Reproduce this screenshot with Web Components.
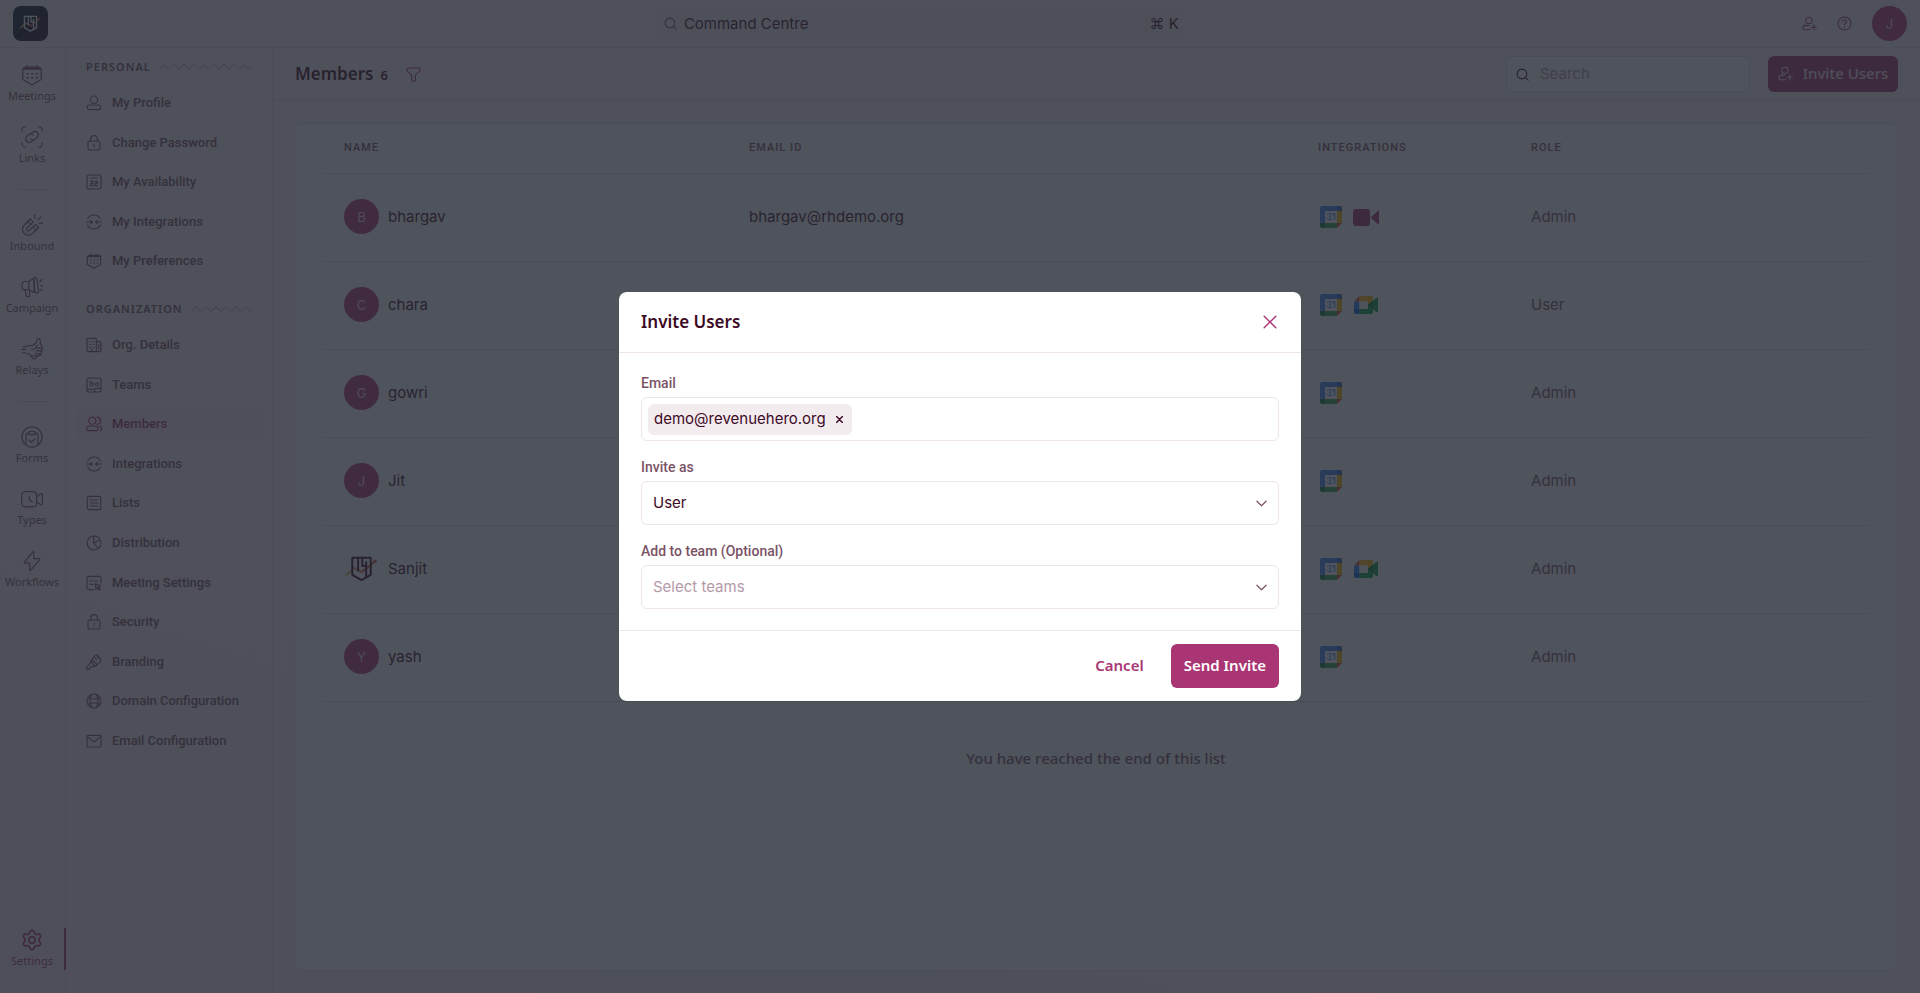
<!DOCTYPE html>
<html lang="en">
<head>
<meta charset="utf-8">
<meta name="viewport" content="width=device-width, initial-scale=1">
<title>Members</title>
<style>
  :root {
    --ink: #3d0a26;
    --muted: #7a5266;
    --faint: #b499a7;
    --line: #efe4e9;
    --rule: #e9dbe3;
    --brand: #aa3574;
    --ui: "Noto Sans", "Open Sans", sans-serif;
    --label: Roboto, "Noto Sans", sans-serif;
    --text: Inter, "Noto Sans", sans-serif;
  }
  body { margin: 0; font-family: var(--ui); color: var(--ink); }
</style>
</head>
<body>
<rh-app></rh-app>
<rh-invite-dialog></rh-invite-dialog>

<script>
const define = (name, html, setup) => {
  const tpl = document.createElement('template');
  tpl.innerHTML = html;
  customElements.define(name, class extends HTMLElement {
    constructor() {
      super();
      this.attachShadow({ mode: 'open' }).append(tpl.content.cloneNode(true));
    }
    connectedCallback() { if (setup) setup(this, this.shadowRoot); }
  });
};

const ICONS = {
  meetings: '<path d="M2 5.5v11.5l10 6 10-6V5.500"/><path d="M2.500 5.500C2.500 4 3 3.500 4.500 3.500h15c1.500 0 2 .5 2 2z" fill="currentColor"/><path d="M7 1.500v3M17 1.500v3"/><path d="M7 10.500h.5M12 10.500h.5M17 10.500h.5M7 15h.5M12 15h.5M17 15h.5" stroke-width="2"/>',
  links: '<path d="M1 5.500V4.500a3.500 3.500 0 0 1 3.500-3.500M19.500 1A3.500 3.500 0 0 1 23 4.500v1M23 18.500v1a3.500 3.500 0 0 1-3.500 3.500M4.500 23A3.500 3.500 0 0 1 1 19.500v-1"/><path d="M11 8.500l1.800-1.700a3.700 3.700 0 0 1 5.200 5.200l-2.300 2.300a3.700 3.700 0 0 1-5.300-.3"/><path d="M13 15.500l-1.800 1.700a3.700 3.700 0 0 1-5.200-5.200l2.300-2.300a3.700 3.700 0 0 1 5.300.3"/>',
  inbound: '<path d="M10 5.500L3.500 12a6.500 6.500 0 0 0 9.200 9.200l6.500-6.500-3.400-3.400-6.500 6.500a1.800 1.800 0 0 1-2.600-2.600l6.600-6.400z"/><path d="M7.300 8.200l3.300 3.300M13 14l3.300 3.300M15 .8V4.500M22 2.800l-3.500 3.700M23.500 10h-3.700"/>',
  campaign: '<path d="M8.500 6H4a3 3 0 0 0-3 3v3a3 3 0 0 0 3 3h4.500zM8.500 6L14 2.500M8.500 15l6 3M14 2.500c1.500-1.500 3-1 3.300 1l2 12.500c.3 2-1.500 3-3.300 2l-1.500-1z"/><path d="M14 3l1 13M4.500 15l1.200 6.500c.3 1.500 3.600 1.500 3.600 0V15.500M20.500 6l2.500-2.500M21.500 10.500H24M21.500 14.500l2 1.500"/>',
  relays: '<path d="M7 8.500l6-.5 4-3 .3-3a1.900 1.900 0 0 1 3.700.3V6c2 1.500 2.300 4 2 7-.2 3.500-1.500 5.500-3.500 6.500H11l-3-2.500H6"/><path d="M17 11h5M16.500 14h5.500M16 17h5M1 12.500h4M2 16h2.500M2.500 9.500h3M11 20l2 2.500h2.500l2-2.500M11.500 12.500c3 0 5-1.500 6.500-5"/>',
  forms: '<circle cx="12" cy="12" r="11"/><path d="M8.500 8H7a1.500 1.500 0 0 0-1.500 1.500V20.500M15.500 8H17a1.500 1.500 0 0 1 1.500 1.500V20.500"/><rect x="8.500" y="6" width="7" height="3.500" rx="1"/><path d="M9 15.500l2.200 2.200 3.800-3.700"/>',
  types: '<rect x=".8" y="4" width="16.200" height="16.500" rx="3.500"/><path d="M17 10l4-3.500q2.300-1 2.300 1V17q0 2-2.300 1l-4-3.200M9 9v3.500l3 2.500"/>',
  workflows: '<path d="M13.500 1.500L3.500 13.500q-.3.800.7.800H9.500V21.500q.2 1.500 1.200.5L20.500 10.500q.3-1-.7-1H14V2.500q-.1-1.500-.5-1z"/>',
  settings: '<path stroke-width="1.800" d="M9.700 3.500C10.300 .7 13.700 .7 14.300 3.500c.4 1.800 2.300 2.900 4 2.300 2.500-.9 4.200 2 2.300 3.900-1.300 1.200-1.300 3.400 0 4.600 1.900 1.900.2 4.800-2.300 3.900-1.700-.6-3.600.5-4 2.300-.6 2.800-4 2.800-4.600 0-.4-1.800-2.300-2.900-4-2.300-2.500.9-4.200-2-2.300-3.900 1.300-1.200 1.300-3.400 0-4.600C1.500 7.800 3.200 4.900 5.700 5.800c1.700.6 3.600-.5 4-2.300z"/><circle cx="12" cy="12" r="3.400" stroke-width="1.800"/>',
  profile: '<circle cx="12" cy="7" r="5.500"/><path d="M5.500 15h13c2 0 3.500 1.500 3.500 3.500S21 22 19.500 22h-15C3 22 2 20.500 2 18.500S3.500 15 5.500 15z"/>',
  lock: '<rect x="3" y="9" width="18" height="13.500" rx="2.500"/><path d="M7 9V6a5 5 0 0 1 10 0v3M12 14v4"/>',
  availability: '<rect x="1.500" y="1.500" width="21" height="21" rx="3.500"/><path d="M7 6h10M7 11h3.500v3H7v3.500h3.500M13.500 11H17v3h-3.500v3.500H17"/>',
  integrations: '<path d="M2.500 7.500a10.500 10.500 0 0 1 19 0M2.500 16.500a10.500 10.500 0 0 0 19 0M.5 12h9M7 9.500L9.500 12 7 14.500M23.500 12h-9M17 9.500L14.500 12l2.500 2.500"/>',
  org: '<rect x="1.500" y="2" width="14" height="20" rx="1.500"/><path d="M15.500 7h5a2 2 0 0 1 2 2v11a2 2 0 0 1-2 2h-5M19 11v7M5.500 6.500h1M10.500 6.500h1M5.500 11h1M10.500 11h1M5.500 15.500h1M10.500 15.500h1M8.500 18v4"/>',
  teams: '<rect x="1.500" y="1.500" width="21" height="21" rx="3.500"/><circle cx="8.500" cy="11" r="2.500"/><circle cx="16.500" cy="11" r="2.300"/><path d="M2 18.500h10l2 4M13.500 17H22M5.500 7.500h2"/>',
  members: '<circle cx="9.500" cy="7" r="5.300"/><path d="M4.500 15h10c2 0 3.500 1.500 3.500 3.500 0 1.500-.5 3.500-2 3.500H3c-1.500 0-2-2-2-3.500C1 16.500 2.500 15 4.500 15zM16.500 1.700a5.300 5.300 0 0 1 0 10.600M20 15c2.500 0 3.500 1.500 3.500 3.500 0 1.500-.5 3.500-2 3.500"/>',
  lists: '<rect x="2" y="2" width="20" height="20" rx="2.500"/><path d="M6.500 7.500h11M6.500 12h11M6.500 16.500h11"/>',
  distribution: '<circle cx="12" cy="12" r="10.500"/><path d="M11.500 1.500V12l7 8M11.500 12l10-4.500"/>',
  meetset: '<path d="M12 22H4.500a3 3 0 0 1-3-3V5a3 3 0 0 1 3-3h15a3 3 0 0 1 3 3v7"/><path d="M6 9h4M13 9h5M6 14h5M14 13l8 3-3.500 1.500 3 4-1.500 1-3-4-2 3z"/>',
  branding: '<path d="M13 3l3.500-1.500 6 6.500-1 3.500-7.500 7L7 11zM7 11l-1.500 4.500L1.500 19a2 2 0 0 0 3 3.500L8.500 18.500 14 18.500M14 6l2 2M17 3.500l2 2.500M9.500 9l7 7"/>',
  domain: '<circle cx="12" cy="12" r="10.500"/><path d="M3 7.500c6 2 12 2 18 0M3 16.500c6-2 12-2 18 0M9 1.800C5 8 5 16 9 22.200M15 1.800c4 6.200 4 14.200 0 20.400"/>',
  mail: '<rect x="1.500" y="3.500" width="21" height="17.500" rx="1.500"/><path d="M2 5.500l10 8 10-8"/>',
  search: '<circle cx="11" cy="11" r="9"/><path d="M17.500 17.500L22.500 22.500"/>',
  filter: '<path d="M3 1.500h18c1 0 1.500.8 1.500 2v2.200L15 13v9l-3.500 1L9 21v-8L1.500 5.700V3.500c0-1.200.5-2 1.500-2z"/>',
  adduser: '<circle cx="11" cy="7" r="5"/><path d="M11 15H5c-2 0-3.500 1.500-3.500 3.500S2.500 22 4 22h9M19 14v8M15 18h8"/>',
  help: '<circle cx="12" cy="12" r="10.500"/><path d="M8.800 9.200a3.200 3.200 0 1 1 4.800 2.800c-1.100.7-1.600 1.200-1.600 2.300M12 17v.8"/>',
  close: '<path d="M2 2l20 20M22 2L2 22"/>',
  chevron: '<path d="M2 7l10 10L22 7"/>'
};

customElements.define('rh-icon', class extends HTMLElement {
  constructor() { super(); this.attachShadow({ mode: 'open' }); }
  connectedCallback() {
    const size = this.getAttribute('size') || 16;
    const weight = this.getAttribute('weight') || 1.7;
    this.shadowRoot.innerHTML = `<style>:host{display:inline-flex;flex:none}svg{display:block}</style>
      <svg width="${size}" height="${size}" viewBox="0 0 24 24" fill="none" stroke="currentColor" stroke-width="${weight}" stroke-linecap="round" stroke-linejoin="round" aria-hidden="true">${ICONS[this.getAttribute('name')]}</svg>`;
  }
});

/* Shield logo; its outline takes the current text colour. */
define('rh-logo', `
<style>:host{display:block}svg{display:block;width:100%;height:100%}</style>
<svg viewBox="0 0 36 36" fill="none" stroke-linejoin="round" stroke-linecap="round" aria-hidden="true">
  <path d="M2.500 24.500l8-7" stroke="#d9a766" stroke-width="2.200"/>
  <path d="M10.500 17.500l8 4" stroke="#dd9468" stroke-width="2.200"/>
  <path d="M18.500 21.500l13-10.500" stroke="#d86e5c" stroke-width="2.200"/>
  <circle cx="32" cy="10.500" r="1.700" fill="#d85548"/>
  <path d="M8.500 7h19v17.500L18 30l-9.500-5.500z" stroke="currentColor" stroke-width="2"/>
  <path d="M14.500 7v13M18.800 7v8.500h4M22.800 11.500v15" stroke="currentColor" stroke-width="2"/>
</svg>`);

define('rh-avatar', `
<style>
  :host { display: inline-grid; place-items: center; width: 35px; height: 35px; border-radius: 50%; flex: none;
    background: #bb3a7a; color: #f0d3e1; font: 400 13px/20px var(--text); }
</style><slot></slot>`);

define('rh-calendar-icon', `
<style>:host{display:inline-flex}</style>
<svg width="22" height="22" viewBox="0 0 22 22" role="img" aria-label="Google Calendar">
  <path d="M2 0h15v5H5v12H0V2a2 2 0 0 1 2-2z" fill="#4285f4"/>
  <path d="M17 0h3a2 2 0 0 1 2 2v3h-5z" fill="#1967d2"/>
  <path d="M17 5h5v12h-5z" fill="#fbbc04"/>
  <path d="M0 17h5v5H2a2 2 0 0 1-2-2z" fill="#188038"/>
  <path d="M5 17h12v5H5z" fill="#34a853"/>
  <path d="M17 17h5l-5 5z" fill="#ea4335"/>
  <path d="M5 5h12v12H5z" fill="#fff"/>
  <text x="11" y="14" text-anchor="middle" font-family="Inter, sans-serif" font-size="9" font-weight="500" fill="#4285f4">31</text>
</svg>`);

define('rh-meet-icon', `
<style>:host{display:inline-flex}</style>
<svg width="26" height="22" viewBox="0 0 26 22" role="img" aria-label="Google Meet">
  <path d="M1 7.500L6.500 2v5.500z" fill="#ea4335"/><path d="M1 7.500h5.500V15H1z" fill="#2684fc"/>
  <path d="M1 15h5.500v5H3a2 2 0 0 1-2-2z" fill="#0066da"/>
  <path d="M6.500 2H18a2 2 0 0 1 2 2v4l-5 3.500v-4H6.500z" fill="#ffba00"/>
  <path d="M6.500 15H15v-3.500l5 4V18a2 2 0 0 1-2 2H6.500z" fill="#00ac47"/>
  <path d="M14.500 11l9-7q1.500-1 1.500 0v14q0 1-1.500 0z" fill="#00a045"/><path d="M6.500 7.500h8V15h-8z" fill="#fff"/><path d="M14.500 11L20 6.500v9z" fill="#00832d"/>
</svg>`);

define('rh-video-icon', `
<style>:host{display:inline-flex}</style>
<svg width="26" height="22" viewBox="0 0 26 22" role="img" aria-label="Video call">
  <rect y="3" width="17" height="17" rx="3" fill="#aa3574"/><path d="M17.500 11.500L26 4v15z" fill="#aa3574"/>
</svg>`);

define('rh-topbar', `
<style>
  :host { display: grid; grid-template-columns: 8fr 530px 9fr; align-items: center; height: 47px; padding: 0 13px; border-bottom: 1px solid var(--rule); }
  .mark { display: block; width: 35px; height: 35px; border-radius: 8px; background: linear-gradient(135deg, #10263f, #161222 50%, #2b0f38); color: #fff; padding: 6px; box-sizing: border-box; }
  .command { display: flex; align-items: center; gap: 7px; height: 30px; padding: 0 6px 0 9px; border: 0; border-radius: 6px; background: #f8eff3; color: var(--ink); font: 400 15px/24px var(--text); text-align: left; }
  .command rh-icon { color: var(--muted); }
  .command span { flex: 1; }
  .command kbd { font: inherit; }
  .tools { display: flex; justify-content: flex-end; align-items: center; gap: 20px; color: var(--brand); }
  .tools a { display: flex; color: inherit; text-decoration: none; }
</style>
<a class="mark" href="#home" aria-label="Home"><rh-logo></rh-logo></a>
<button class="command" type="button"><rh-icon name="search" size="13" weight="2"></rh-icon><span>Command Centre</span><kbd>⌘ K</kbd></button>
<div class="tools">
  <a href="#add" aria-label="Add user"><rh-icon name="adduser" size="15"></rh-icon></a>
  <a href="#help" aria-label="Help"><rh-icon name="help" size="15"></rh-icon></a>
  <a href="#me" aria-label="Account"><rh-avatar>J</rh-avatar></a>
</div>`);

define('rh-rail-item', `
<style>
  :host { display: block; color: var(--muted); border-right: 2px solid transparent; }
  :host([active]) { color: var(--brand); border-right-color: var(--brand); }
  a { display: flex; flex-direction: column; align-items: center; color: inherit; text-decoration: none; font: 400 11px/18px var(--ui); white-space: nowrap; }
  span { display: grid; place-items: center; height: 24px; }
</style>
<a><span></span><slot></slot></a>`, (el, root) => {
  root.querySelector('a').href = '#' + el.getAttribute('icon');
  root.querySelector('span').innerHTML = `<rh-icon name="${el.getAttribute('icon')}" size="22" weight="1.300"></rh-icon>`;
});

define('rh-rail', `
<style>
  :host { display: block; width: 65px; border-right: 1px solid var(--rule); }
  nav { display: flex; flex-direction: column; gap: 20px; height: 100%; box-sizing: border-box; padding: 15px 0 23px; margin-right: -1px; }
  hr { width: 29px; height: 1px; border: 0; margin: 2px auto 3px; background: #dcc9d2; }
  .last { margin-top: auto; }
</style>
<nav aria-label="Main">
  <rh-rail-item icon="meetings">Meetings</rh-rail-item>
  <rh-rail-item icon="links">Links</rh-rail-item>
  <hr>
  <rh-rail-item icon="inbound">Inbound</rh-rail-item>
  <rh-rail-item icon="campaign">Campaign</rh-rail-item>
  <rh-rail-item icon="relays">Relays</rh-rail-item>
  <hr>
  <rh-rail-item icon="forms">Forms</rh-rail-item>
  <rh-rail-item icon="types">Types</rh-rail-item>
  <rh-rail-item icon="workflows">Workflows</rh-rail-item>
  <rh-rail-item class="last" icon="settings" active>Settings</rh-rail-item>
</nav>`);

define('rh-menu-item', `
<style>
  :host { display: block; color: var(--muted); border-radius: 6px; }
  :host([active]) { color: var(--brand); background: #fbe9f1; }
  a { display: flex; align-items: center; gap: 10px; height: 36px; padding: 0 11px 0 10px; color: inherit; text-decoration: none; font: 500 13px/20px var(--label); white-space: nowrap; }
</style>
<a><i></i><slot></slot></a>`, (el, root) => {
  root.querySelector('a').href = '#' + el.getAttribute('icon');
  root.querySelector('i').outerHTML = `<rh-icon name="${el.getAttribute('icon')}" size="16" weight="1.700"></rh-icon>`;
});

/* Slotted items sit straight in .items, which spreads them evenly. */
define('rh-menu-group', `
<style>
  :host { display: block; }
  h2 { display: flex; align-items: center; gap: 8px; margin: 0 0 10px; padding: 0 10px; font: 600 11px/16px var(--ui); letter-spacing: 1px; color: var(--muted); }
  svg { flex: 1; height: 6px; min-width: 0; }
  .items { display: flex; flex-direction: column; justify-content: space-between; }
  :host(.short) .items { min-height: 194px; }
  :host(.long) .items { min-height: 432px; }
</style>
<h2><span></span><svg aria-hidden="true"><defs><pattern id="zig" width="10" height="6" patternUnits="userSpaceOnUse"><path d="M0 5.500L5 .5l5 5" fill="none" stroke="#b499a7"/></pattern></defs><rect width="100%" height="6" fill="url(#zig)"/></svg></h2>
<div class="items"><slot></slot></div>`, (el, root) => {
  root.querySelector('span').textContent = el.getAttribute('label');
});

define('rh-sidebar', `
<style>
  :host { display: flex; flex-direction: column; gap: 22px; width: 186px; padding: 11px 10px 0; border-right: 1px solid var(--rule); }
</style>
<rh-menu-group class="short" label="PERSONAL">
  <rh-menu-item icon="profile">My Profile</rh-menu-item>
  <rh-menu-item icon="lock">Change Password</rh-menu-item>
  <rh-menu-item icon="availability">My Availability</rh-menu-item>
  <rh-menu-item icon="integrations">My Integrations</rh-menu-item>
  <rh-menu-item icon="meetings">My Preferences</rh-menu-item>
</rh-menu-group>
<rh-menu-group class="long" label="ORGANIZATION">
  <rh-menu-item icon="org">Org. Details</rh-menu-item>
  <rh-menu-item icon="teams">Teams</rh-menu-item>
  <rh-menu-item icon="members" active>Members</rh-menu-item>
  <rh-menu-item icon="integrations">Integrations</rh-menu-item>
  <rh-menu-item icon="lists">Lists</rh-menu-item>
  <rh-menu-item icon="distribution">Distribution</rh-menu-item>
  <rh-menu-item icon="meetset">Meeting Settings</rh-menu-item>
  <rh-menu-item icon="lock">Security</rh-menu-item>
  <rh-menu-item icon="branding">Branding</rh-menu-item>
  <rh-menu-item icon="domain">Domain Configuration</rh-menu-item>
  <rh-menu-item icon="mail">Email Configuration</rh-menu-item>
</rh-menu-group>`);

define('rh-page-header', `
<style>
  :host { display: flex; align-items: center; height: 52px; padding: 0 22px; border-bottom: 1px solid var(--rule); }
  h1 { margin: 0; font: 600 17px/24px var(--ui); }
  .count { font: 600 13px/20px var(--ui); margin: 2px 18px 0 7px; }
  .filter { display: flex; padding: 0; border: 0; background: none; color: var(--brand); }
  .search { display: flex; align-items: center; gap: 11px; margin-left: auto; width: 244px; height: 36px; box-sizing: border-box; padding: 0 9px; border: 1px solid var(--rule); border-radius: 6px; background: #fcfcfd; }
  input { flex: 1; min-width: 0; border: 0; padding: 0; background: none; outline: 0; font: 400 15px/24px var(--text); color: var(--ink); }
  input::placeholder { color: var(--faint); opacity: 1; }
  .invite { display: flex; align-items: center; justify-content: center; gap: 10px; width: 130px; height: 36px; margin-left: 18px; padding: 0 0 2px; border: 0; border-radius: 6px; background: var(--brand); color: #f6e6ee; font: 500 15px/24px var(--ui); white-space: nowrap; }
</style>
<h1>Members</h1><span class="count">6</span>
<button class="filter" type="button" aria-label="Filter"><rh-icon name="filter" size="15"></rh-icon></button>
<label class="search"><rh-icon name="search" size="13" weight="2"></rh-icon><input type="search" placeholder="Search" aria-label="Search"></label>
<button class="invite" type="button"><rh-icon name="adduser" size="15"></rh-icon>Invite Users</button>`);

const MEMBERS = [
  ['bhargav', 'bhargav@rhdemo.org', 'video', 'Admin'],
  ['chara', '', 'meet', 'User'],
  ['gowri', '', '', 'Admin'],
  ['Jit', '', '', 'Admin'],
  ['Sanjit', '', 'meet', 'Admin'],
  ['yash', '', '', 'Admin']
];

define('rh-members-table', `
<style>
  :host { display: block; padding: 0 27px; border: 1px solid var(--rule); border-radius: 8px; background: #fff; }
  table { width: 100%; border-collapse: separate; border-spacing: 0; table-layout: fixed; }
  th, td { box-sizing: border-box; border-bottom: 1px solid var(--rule); padding: 0 22px 2px; }
  th { height: 50px; text-align: left; font: 500 11px/16px var(--label); letter-spacing: 1px; color: var(--muted); }
  th:nth-child(1) { width: 405px; } th:nth-child(2) { width: 36.760%; } th:nth-child(3) { width: 213px; }
  td { height: 88px; font: 400 15px/24px var(--text); vertical-align: middle; }
  td:last-child { color: var(--muted); }
  .person, .apps { display: flex; align-items: center; gap: 9px; }
  .apps { gap: 11px; padding-left: 2px; }
  rh-logo { width: 35px; height: 35px; }
  p { margin: 0; padding: 46px 0; text-align: center; font: 500 15px/20px var(--ui); color: var(--muted); }
</style>
<table>
  <thead><tr><th>NAME</th><th>EMAIL ID</th><th>INTEGRATIONS</th><th>ROLE</th></tr></thead>
  <tbody></tbody>
</table>
<p>You have reached the end of this list</p>`, (el, root) => {
  root.querySelector('tbody').innerHTML = MEMBERS.map(([name, mail, app, role]) => `<tr>
    <td><div class="person">${name === 'Sanjit' ? '<rh-logo></rh-logo>' : `<rh-avatar>${name[0].toUpperCase()}</rh-avatar>`}<span>${name}</span></div></td>
    <td>${mail}</td>
    <td><div class="apps"><rh-calendar-icon></rh-calendar-icon>${app ? `<rh-${app}-icon></rh-${app}-icon>` : ''}</div></td>
    <td>${role}</td></tr>`).join('');
});

define('rh-app', `
<style>
  :host { display: flex; flex-direction: column; min-height: 100vh; background: linear-gradient(200deg, #fdf4f8 60%, #f9e9f3); }
  .body { display: flex; flex: 1; }
  main { display: flex; flex-direction: column; flex: 1; min-width: 0; }
  rh-members-table { flex: 1; margin: 22px 22px 22px 21px; }
</style>
<rh-topbar></rh-topbar>
<div class="body">
  <rh-rail></rh-rail>
  <rh-sidebar></rh-sidebar>
  <main><rh-page-header></rh-page-header><rh-members-table></rh-members-table></main>
</div>`);

define('rh-invite-dialog', `
<style>
  :host { position: fixed; inset: 0; display: grid; place-items: center; background: rgba(35, 40, 50, .8); }
  dialog { position: static; display: block; width: 682px; max-width: 100%; box-sizing: border-box; margin: 0; padding: 0; border: 0; border-radius: 8px; background: #fff; color: var(--ink); }
  header { display: flex; align-items: center; justify-content: space-between; height: 60px; padding: 0 22px; border-bottom: 1px solid var(--line); }
  h2 { margin: 0; font: 600 17px/24px var(--ui); }
  .close { display: flex; padding: 2px; border: 0; background: none; color: var(--brand); }
  form { display: flex; flex-direction: column; gap: 16px; padding: 20px 22px 21px; }
  .field { display: flex; flex-direction: column; gap: 4px; }
  label { font: 500 14px/20px var(--label); color: var(--muted); }
  .box { display: flex; align-items: center; height: 44px; box-sizing: border-box; border: 1px solid var(--line); border-radius: 6px; }
  .emails { padding: 0 6px; gap: 8px; }
  .chip { display: flex; align-items: center; gap: 10px; height: 31px; padding: 0 9px 0 6px; border-radius: 6px; background: #f3ecef; font: 400 15px/24px var(--text); }
  .chip button { display: flex; padding: 0; border: 0; background: none; color: var(--ink); }
  input { flex: 1; min-width: 0; border: 0; outline: 0; padding: 0; background: none; font: 400 15px/24px var(--text); }
  .pick { display: grid; align-items: center; }
  .pick > * { grid-area: 1 / 1; }
  .pick rh-icon { justify-self: end; margin-right: 11px; color: var(--muted); pointer-events: none; }
  select { appearance: none; width: 100%; height: 42px; padding: 0 32px 0 11px; border: 0; border-radius: 6px; background: none; outline: 0; font: 400 15px/24px var(--text); color: var(--ink); }
  select.empty { color: var(--faint); }
  footer { display: flex; justify-content: flex-end; gap: 14px; padding: 13px 22px; border-top: 1px solid var(--line); }
  footer button { height: 44px; padding: 0 13px 2px; border: 0; border-radius: 6px; background: none; color: var(--brand); font: 600 15px/24px var(--ui); }
  footer .send { background: var(--brand); color: #fff; }
</style>
<dialog open aria-labelledby="title">
  <header><h2 id="title">Invite Users</h2><button class="close" type="button" aria-label="Close"><rh-icon name="close" size="14" weight="2.400"></rh-icon></button></header>
  <form id="invite">
    <div class="field"><label for="email">Email</label>
      <div class="box emails"><span class="chip">demo@revenuehero.org<button type="button" aria-label="Remove"><rh-icon name="close" size="7" weight="5"></rh-icon></button></span><input id="email" type="text"></div></div>
    <div class="field"><label for="role">Invite as</label>
      <div class="box pick"><select id="role"><option>User</option><option>Admin</option></select><rh-icon name="chevron" size="11" weight="2.600"></rh-icon></div></div>
    <div class="field"><label for="team">Add to team (Optional)</label>
      <div class="box pick"><select id="team" class="empty"><option>Select teams</option></select><rh-icon name="chevron" size="11" weight="2.600"></rh-icon></div></div>
  </form>
  <footer><button type="button">Cancel</button><button class="send" type="submit" form="invite">Send Invite</button></footer>
</dialog>`);
</script>
</body>
</html>
